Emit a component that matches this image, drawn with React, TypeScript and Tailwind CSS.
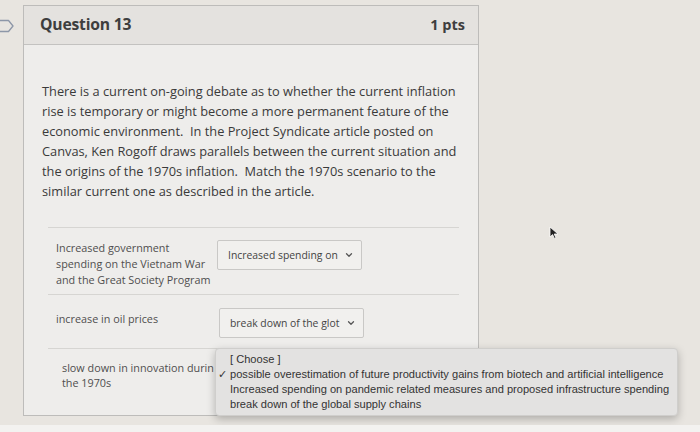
import { ChevronDown } from "lucide-react";

const body = [
  "There is a current on-going debate as to whether the current inflation",
  "rise is temporary or might become a more permanent feature of the",
  "economic environment.  In the Project Syndicate article posted on",
  "Canvas, Ken Rogoff draws parallels between the current situation and",
  "the origins of the 1970s inflation.  Match the 1970s scenario to the",
  "similar current one as described in the article.",
];

const options = [
  "[ Choose ]",
  "possible overestimation of future productivity gains from biotech and artificial intelligence",
  "Increased spending on pandemic related measures and proposed infrastructure spending",
  "break down of the global supply chains",
];

function Select({ value }: { value: string }) {
  return (
    <div className="flex h-[30px] w-[145px] items-center justify-between gap-[5px] rounded-[2px] border border-[#c9c8c6] bg-[#f1f0ee] pl-[10px] pr-[7px] text-[10.4px] text-[#444]">
      <span className="whitespace-nowrap">{value}</span>
      <ChevronDown size={10} strokeWidth={3} className="shrink-0 text-[#555]" />
    </div>
  );
}

export default function App() {
  return (
    <div className="relative h-[432px] w-[700px] overflow-hidden bg-[#e8e5e0] font-['Open_Sans',sans-serif]">
      <svg className="absolute left-0 top-[19px]" width="16" height="14" viewBox="0 0 16 14" fill="none">
        <path d="M-2 1.5h10.5l4.5 5.5-4.5 5.5H-2" stroke="#8d97a8" strokeWidth="1.3" strokeLinejoin="round" />
      </svg>

      <div className="ml-[23px] mt-[5px] flex h-[411px] w-[456px] flex-col border border-[#bdbcba] bg-[#eeedeb]">
        <div className="flex h-[39px] shrink-0 items-center justify-between border-b border-[#c3c2c0] bg-[#e4e2df] pl-[16px] pr-[13px] text-[#3e3e3e]">
          <span className="text-[15.7px] font-bold tracking-[-0.2px]">Question 13</span>
          <span className="text-[14.5px] font-bold">1 pts</span>
        </div>

        <div className="pl-[18px] pt-[36px] text-[12.8px] leading-[20px] text-[#3a3a3a]">
          {body.map((line) => (
            <div key={line} className="whitespace-pre">
              {line}
            </div>
          ))}
        </div>

        <div className="ml-[24px] mr-[19px] mt-[26px] text-[10.8px] leading-[16px] text-[#4e4e4e]">
          <div className="flex h-[67px] items-start border-t border-[#d6d5d2] pl-[8px] pt-[12px]">
            <div className="w-[161px] whitespace-nowrap">
              Increased government
              <br />
              spending on the Vietnam War
              <br />
              and the Great Society Program
            </div>
            <Select value="Increased spending on" />
          </div>
          <div className="flex h-[54px] items-start border-t border-[#d6d5d2] pl-[8px] pt-[16px]">
            <div className="w-[163px]">increase in oil prices</div>
            <div className="-mt-[3px]">
              <Select value="break down of the glot" />
            </div>
          </div>
          <div className="flex h-[60px] items-start border-t border-[#d6d5d2] pl-[14px] pt-[11px] text-[10.8px] leading-[15px]">
            <div className="w-[151px]">
              <div className="whitespace-nowrap">slow down in innovation durin</div>
              <div>the 1970s</div>
            </div>
          </div>
        </div>
      </div>

      <div className="absolute left-[215px] top-[348px] w-[463px] rounded-[4px] border border-[#cfcecc] bg-[#e3e2e1] py-[3px] pl-[12px] font-['Liberation_Sans',sans-serif] text-[11.1px] leading-[15px] text-[#333] shadow-[0_3px_8px_rgba(0,0,0,0.25)]">
        {options.map((o, i) => (
          <div key={o} className="relative whitespace-nowrap pl-[2px]">
            {i === 1 && <span className="absolute -left-[10px] top-0">✓</span>}
            {o}
          </div>
        ))}
      </div>

      <svg className="absolute left-[549px] top-[226px]" width="12" height="14" viewBox="0 0 12 14">
        <path d="M1 1v10l2.6-2.4 1.7 3.8 1.6-.7-1.7-3.7H9z" fill="#222" stroke="#fff" strokeWidth="0.8" />
      </svg>

      <div className="absolute bottom-0 left-0 h-[7px] w-full bg-[#f3f2f0]" />
    </div>
  );
}
